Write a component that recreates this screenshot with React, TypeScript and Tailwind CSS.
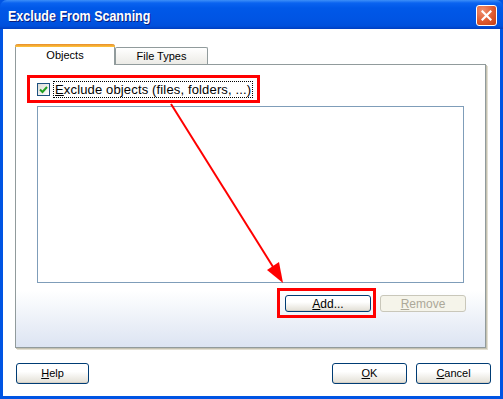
import React from "react";

type BtnProps = {
  children: React.ReactNode;
  disabled?: boolean;
  className?: string;
};

// XP style push button
function XpButton({ children, disabled, className }: BtnProps) {
  return (
    <button
      className={
        disabled
          ? `flex items-center justify-center rounded-[3px] border border-[#c9c7ba] bg-[#f5f4ea] text-[#aca899] leading-none ${className}`
          : `flex items-center justify-center rounded-[3px] border border-[#003c74] bg-linear-to-b from-white from-40% to-[#e2dfd5] text-black leading-none shadow-[inset_0_-1px_0_#d6d0c5] ${className}`
      }
    >
      {children}
    </button>
  );
}

function TitleBar() {
  return (
    <div className="h-[29px] shrink-0 flex items-start pl-[8px] pr-[6px] rounded-t-[7px] bg-[linear-gradient(to_bottom,#3d8ff8_0px,#0a63f0_3px,#0058e8_8px,#0054e3_20px,#0050dc_26px,#003ec0_29px)]">
      <span className="mt-[9px] text-[12.5px] font-bold text-white leading-none scale-y-115 origin-top text-shadow-[1px_1px_0_#0a1e7e]">
        Exclude From Scanning
      </span>
      <div className="ml-auto mt-[5px] w-[21px] h-[21px] rounded-[3px] border border-white bg-[radial-gradient(circle_at_30%_25%,#f0906e,#de5a30_55%,#c23d12)] flex items-center justify-center">
        <svg width="11" height="11" viewBox="0 0 11 11">
          <path d="M1.5 1.5 L9.5 9.5 M9.5 1.5 L1.5 9.5" stroke="white" strokeWidth="2.2" strokeLinecap="square" />
        </svg>
      </div>
    </div>
  );
}

function CheckBox() {
  return (
    <div className="w-[13px] h-[13px] shrink-0 border border-[#1c5180] bg-linear-to-br from-[#dcdcd7] to-white flex items-center justify-center">
      <svg width="9" height="9" viewBox="0 0 9 9">
        <path d="M1 4.5 L3.5 7 L8 2" stroke="#21a121" strokeWidth="2" fill="none" />
      </svg>
    </div>
  );
}

export default function App() {
  return (
    <div className="relative w-[503px] h-[399px] flex flex-col bg-[#0054e3] font-['Liberation_Sans',Arial,sans-serif] text-black">
      <TitleBar />

      <div className="flex-1 mx-[3px] mb-[3px] bg-white flex flex-col">
        <div className="px-3 pt-[15px]">
          {/* tabs */}
          <div className="flex items-end h-[20px]">
            <div className="relative z-10 -mb-px w-[100px] h-[21px] border-x border-[#919b9c] bg-white rounded-t-[3px] flex flex-col">
              <div className="h-[3px] -mx-px rounded-t-[3px] bg-linear-to-b from-[#e68b2c] to-[#ffc73c]" />
              <div className="flex-1 flex items-center justify-center text-[11px] pb-[2px]">Objects</div>
            </div>
            <div className="w-[93px] h-[17px] border border-b-0 border-[#919b9c] rounded-t-[2px] bg-linear-to-b from-white to-[#ecebe6] flex items-center justify-center text-[11px] pt-px">
              File Types
            </div>
          </div>

          {/* panel */}
          <div className="w-[471px] h-[284px] border border-[#919b9c] bg-linear-to-b from-white from-80% to-[#dce4f2] shadow-[1px_1px_0_#c5c2b2,2px_2px_0_#e3e0d3] flex flex-col">
            <div className="ml-[11px] mt-[10px] w-[233px] h-[28px] border-[3px] border-[#ff0000] flex items-center pl-[7px]">
              <CheckBox />
              <span className="ml-[3px] border border-dotted border-black px-px h-[17px] flex items-center text-[13px] tracking-[0.15px] leading-none whitespace-nowrap">
                <u>E</u>xclude objects (files, folders, ...)
              </span>
            </div>

            <div className="ml-[21px] mt-[3px] w-[427px] h-[177px] border border-[#7f9db9] bg-white" />

            <div className="mt-[5px] flex items-start">
              <div className="ml-[261px] w-[99px] h-[30px] border-[3px] border-[#ff0000] pl-[5px] pt-[4px]">
                <XpButton className="w-[86px] h-[17px] text-[12px]">
                  <u>A</u>dd...
                </XpButton>
              </div>
              <XpButton disabled className="ml-[4px] mt-[7px] w-[86px] h-[17px] text-[12px]">
                <u>R</u>emove
              </XpButton>
            </div>
          </div>
        </div>

        {/* bottom buttons */}
        <div className="mt-[15px] pl-[13px] pr-[9px] flex items-start">
          <XpButton className="w-[73px] h-[21px] text-[11px]">
            <u>H</u>elp
          </XpButton>
          <XpButton className="ml-auto w-[75px] h-[21px] text-[11px]">
            <u>O</u>K
          </XpButton>
          <XpButton className="ml-[9px] w-[75px] h-[21px] text-[11px]">
            <u>C</u>ancel
          </XpButton>
        </div>
      </div>

      {/* annotation arrow */}
      <svg className="absolute inset-0 pointer-events-none" width="503" height="399" viewBox="0 0 503 399">
        <line x1="171" y1="104" x2="275" y2="270" stroke="#ff0000" strokeWidth="2" />
        <polygon points="283,283 267,270 279,262" fill="#ff0000" />
      </svg>
    </div>
  );
}
